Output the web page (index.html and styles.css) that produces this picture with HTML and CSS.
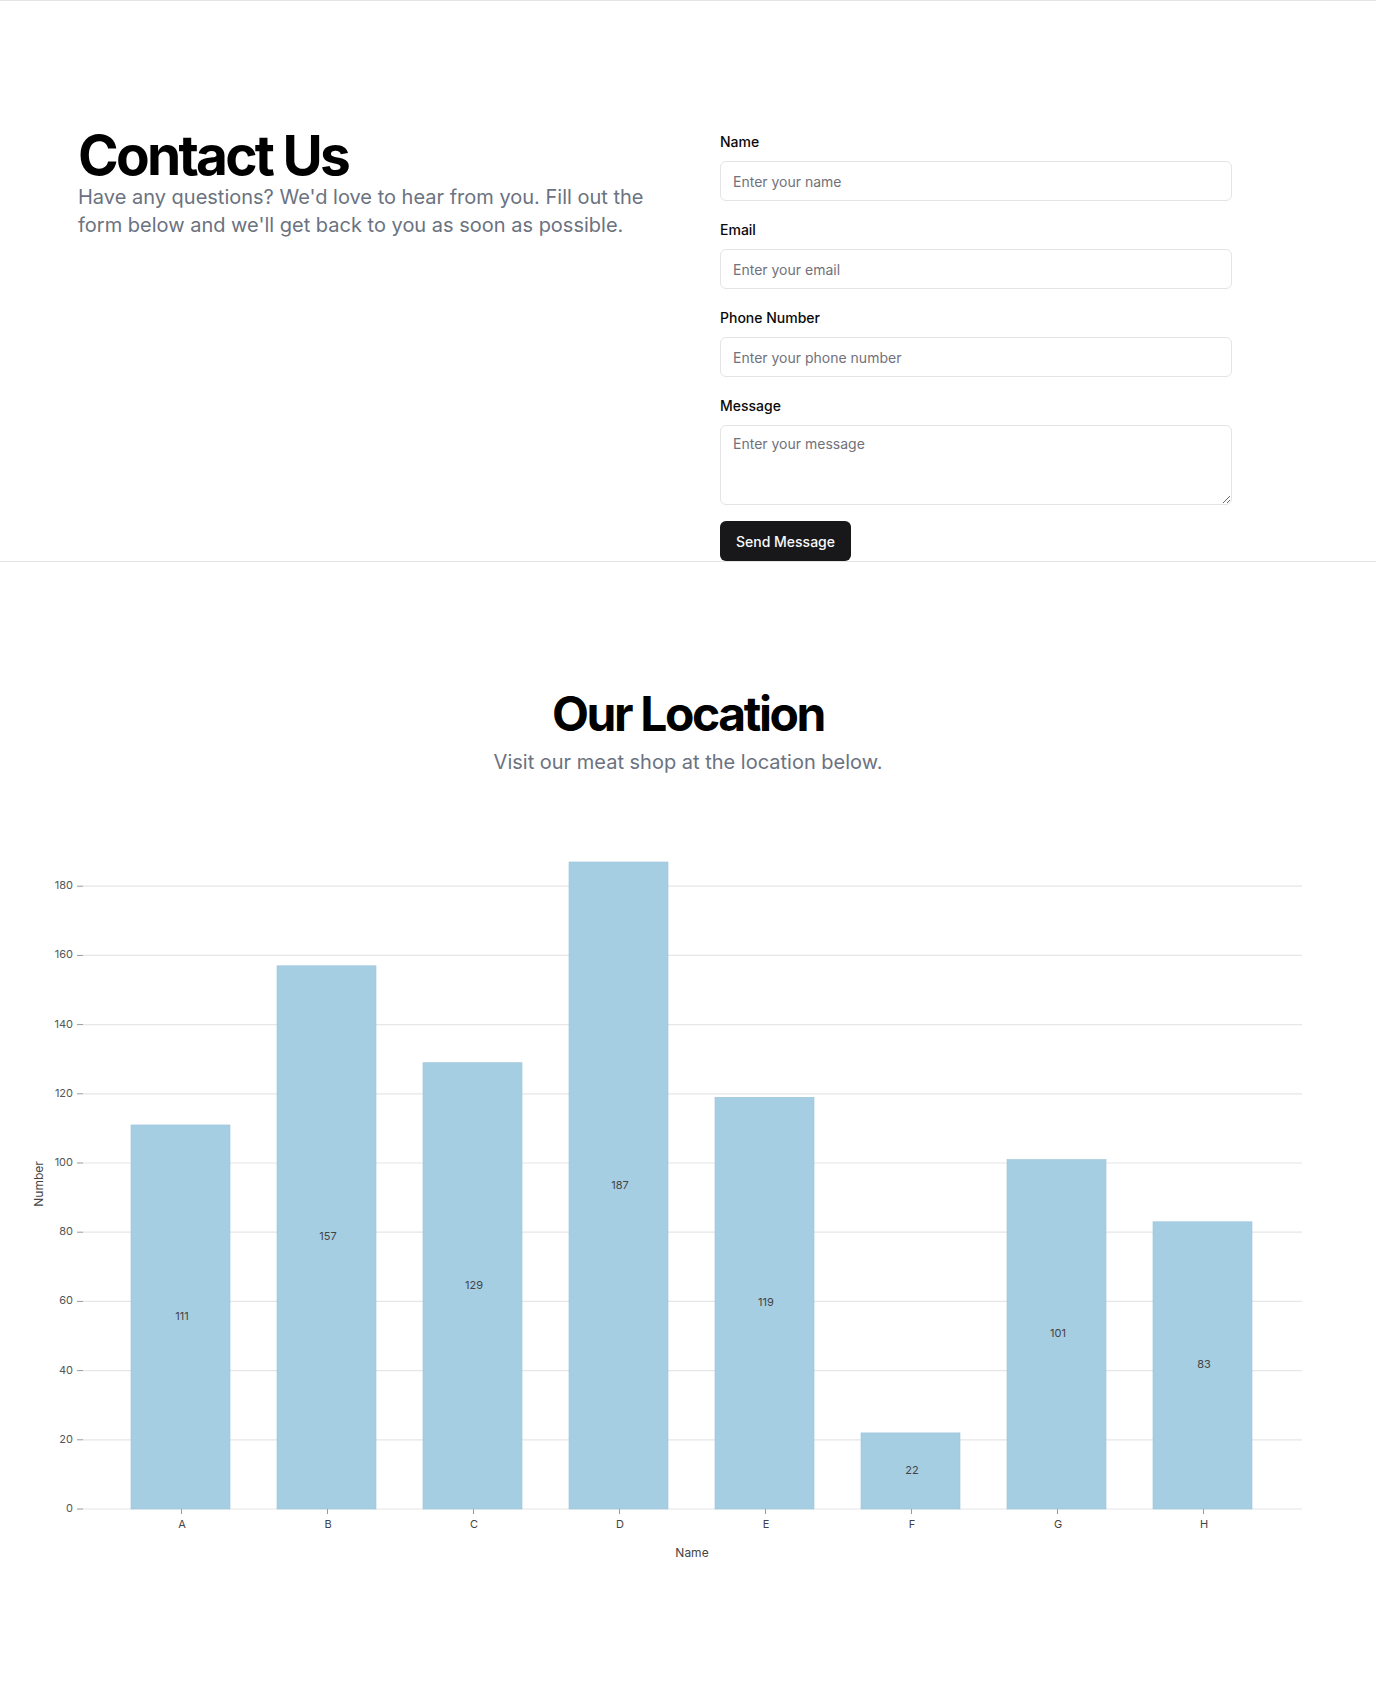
FILE: index.html
```html
<!DOCTYPE html>
<html lang="en">
<head>
<meta charset="utf-8">
<title>Contact Us</title>
<link rel="stylesheet" href="styles.css">
</head>
<body>
<section class="contact">
  <div class="contact-grid">
    <div class="intro">
      <h1 class="title title-lg">Contact Us</h1>
      <p class="lead">Have any questions? We'd love to hear from you. Fill out the form below and we'll get back to you as soon as possible.</p>
    </div>
    <form class="form">
      <div class="field">
        <label class="label" for="name">Name</label>
        <input class="input" id="name" type="text" placeholder="Enter your name">
      </div>
      <div class="field">
        <label class="label" for="email">Email</label>
        <input class="input" id="email" type="email" placeholder="Enter your email">
      </div>
      <div class="field">
        <label class="label" for="phone">Phone Number</label>
        <input class="input" id="phone" type="tel" placeholder="Enter your phone number">
      </div>
      <div class="field">
        <label class="label" for="message">Message</label>
        <textarea class="textarea" id="message" placeholder="Enter your message"></textarea>
      </div>
      <button class="button" type="button">Send Message</button>
    </form>
  </div>
</section>
<section class="location">
  <h2 class="title">Our Location</h2>
  <p class="sub">Visit our meat shop at the location below.</p>
  <svg class="chart" width="1376" height="800" viewBox="0 0 1376 800">
    <g class="grid">
      <line x1="83" x2="1302" y1="708" y2="708"/>
      <line x1="83" x2="1302" y1="638.8" y2="638.8"/>
      <line x1="83" x2="1302" y1="569.6" y2="569.6"/>
      <line x1="83" x2="1302" y1="500.4" y2="500.4"/>
      <line x1="83" x2="1302" y1="431.2" y2="431.2"/>
      <line x1="83" x2="1302" y1="362" y2="362"/>
      <line x1="83" x2="1302" y1="292.8" y2="292.8"/>
      <line x1="83" x2="1302" y1="223.6" y2="223.6"/>
      <line x1="83" x2="1302" y1="154.4" y2="154.4"/>
      <line x1="83" x2="1302" y1="85.2" y2="85.2"/>
    </g>
    <g class="ticks">
      <line x1="77" x2="83" y1="708" y2="708"/>
      <line x1="77" x2="83" y1="638.8" y2="638.8"/>
      <line x1="77" x2="83" y1="569.6" y2="569.6"/>
      <line x1="77" x2="83" y1="500.4" y2="500.4"/>
      <line x1="77" x2="83" y1="431.2" y2="431.2"/>
      <line x1="77" x2="83" y1="362" y2="362"/>
      <line x1="77" x2="83" y1="292.8" y2="292.8"/>
      <line x1="77" x2="83" y1="223.6" y2="223.6"/>
      <line x1="77" x2="83" y1="154.4" y2="154.4"/>
      <line x1="77" x2="83" y1="85.2" y2="85.2"/>
      <line x1="181.5" x2="181.5" y1="708" y2="713"/>
      <line x1="327.5" x2="327.5" y1="708" y2="713"/>
      <line x1="473.5" x2="473.5" y1="708" y2="713"/>
      <line x1="619.5" x2="619.5" y1="708" y2="713"/>
      <line x1="765.5" x2="765.5" y1="708" y2="713"/>
      <line x1="911.5" x2="911.5" y1="708" y2="713"/>
      <line x1="1057.5" x2="1057.5" y1="708" y2="713"/>
      <line x1="1203.5" x2="1203.5" y1="708" y2="713"/>
    </g>
    <g class="ylabels">
      <text x="73" y="708">0</text>
      <text x="73" y="638.8">20</text>
      <text x="73" y="569.6">40</text>
      <text x="73" y="500.4">60</text>
      <text x="73" y="431.2">80</text>
      <text x="73" y="362">100</text>
      <text x="73" y="292.8">120</text>
      <text x="73" y="223.6">140</text>
      <text x="73" y="154.4">160</text>
      <text x="73" y="85.2">180</text>
    </g>
    <g class="bars">
      <rect x="131" y="323.95" width="99" height="384.05"/>
      <rect x="277" y="164.8" width="99" height="543.2"/>
      <rect x="423" y="261.7" width="99" height="446.3"/>
      <rect x="569" y="61" width="99" height="647"/>
      <rect x="715" y="296.3" width="99" height="411.7"/>
      <rect x="861" y="631.9" width="99" height="76.1"/>
      <rect x="1007" y="358.6" width="99" height="349.4"/>
      <rect x="1153" y="420.8" width="99" height="287.2"/>
    </g>
    <g class="values">
      <text x="182" y="516">111</text>
      <text x="328" y="436.4">157</text>
      <text x="474" y="484.9">129</text>
      <text x="620" y="384.5">187</text>
      <text x="766" y="502.2">119</text>
      <text x="912" y="670">22</text>
      <text x="1058" y="533.3">101</text>
      <text x="1204" y="564.4">83</text>
    </g>
    <g class="xlabels">
      <text x="182" y="724">A</text>
      <text x="328" y="724">B</text>
      <text x="474" y="724">C</text>
      <text x="620" y="724">D</text>
      <text x="766" y="724">E</text>
      <text x="912" y="724">F</text>
      <text x="1058" y="724">G</text>
      <text x="1204" y="724">H</text>
    </g>
    <text class="axis-title" x="692" y="753">Name</text>
    <text class="axis-title" transform="translate(40 383) rotate(-90)">Number</text>
  </svg>
</section>
</body>
</html>
```
FILE: styles.css
```css
* { box-sizing: border-box; }
html, body { margin: 0; padding: 0; background: #fff; }
body {
  font-family: Inter, "Noto Sans", "Liberation Sans", sans-serif;
  color: #09090b;
}
.contact {
  border-top: 1px solid #e4e4e7;
  border-bottom: 1px solid #e4e4e7;
  padding: 132px 0 0;
}
.contact-grid {
  display: grid;
  grid-template-columns: 1fr 512px;
  column-gap: 40px;
  margin: 0 144px 0 78px;
}
.title {
  margin: 0;
  font-size: 48px;
  line-height: 48px;
  font-weight: 700;
  letter-spacing: -0.05em;
  color: #000;
  text-align: center;
}
.title-lg {
  font-size: 55px;
  line-height: 44px;
  text-align: left;
}
.lead {
  margin: 6px 0 0;
  max-width: 600px;
  font-size: 20px;
  line-height: 28px;
  color: #6b7280;
}
.form {
  display: flex;
  flex-direction: column;
}
.field {
  display: flex;
  flex-direction: column;
  gap: 8px;
  margin-bottom: 20px;
}
.field:last-of-type { margin-bottom: 16px; }
.label {
  font-size: 14px;
  line-height: 18px;
  padding-bottom: 2px;
  font-weight: 500;
  color: #09090b;
}
.input, .textarea {
  width: 100%;
  border: 1px solid #e4e4e7;
  border-radius: 6px;
  background: #fff;
  font-family: Inter, "Noto Sans", sans-serif;
  font-size: 14px;
  color: #09090b;
  padding: 0 12px;
  outline: none;
}
.input { height: 40px; }
.textarea {
  height: 80px;
  padding: 8px 12px;
  line-height: 20px;
  resize: vertical;
}
.input::placeholder, .textarea::placeholder { color: #71717a; }
.button {
  align-self: flex-start;
  height: 40px;
  padding: 0 16px;
  border: none;
  border-radius: 6px;
  background: #18181b;
  color: #fafafa;
  font-family: Inter, "Noto Sans", sans-serif;
  font-size: 14px;
  font-weight: 500;
}
.location {
  padding-top: 128px;
  text-align: center;
  height: 1124px;
}
.sub {
  margin: 10px 0 0;
  font-size: 20px;
  line-height: 28px;
  color: #6b7280;
}
.chart {
  display: block;
  margin-top: 25px;
  font-family: Inter, "Noto Sans", sans-serif;
}
.grid line { stroke: #e6e6e6; stroke-width: 1.2; }
.ticks line { stroke: #999; stroke-width: 1; }
.ylabels text {
  font-size: 11px;
  fill: #555;
  text-anchor: end;
  dominant-baseline: middle;
}
.xlabels text {
  font-size: 11px;
  fill: #444;
  text-anchor: middle;
  dominant-baseline: middle;
}
.bars rect { fill: #a6cee3; stroke: #9cc4da; stroke-width: 0.6; }
.values text {
  font-size: 11px;
  fill: #444;
  text-anchor: middle;
  dominant-baseline: middle;
}
.axis-title {
  font-size: 12px;
  fill: #444;
  text-anchor: middle;
  dominant-baseline: middle;
}
```
